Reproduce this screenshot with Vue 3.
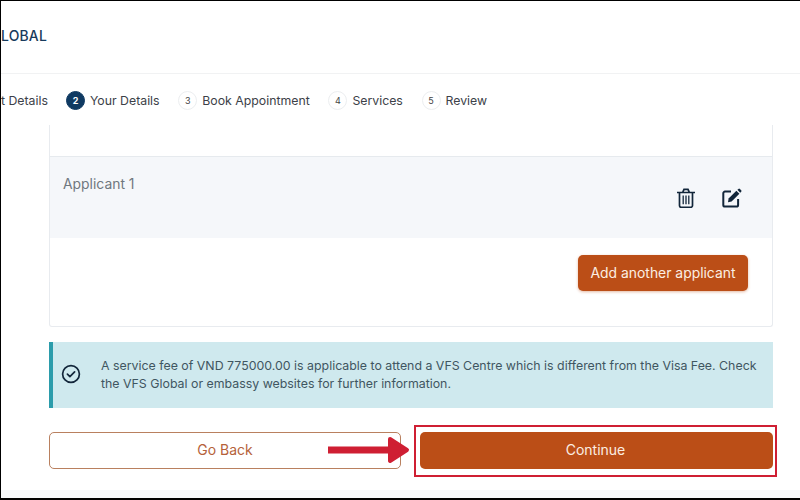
<script setup>
const steps = [
  { n: 3, label: 'Book Appointment' },
  { n: 4, label: 'Services' },
  { n: 5, label: 'Review' },
]
</script>

<template>
  <div class="page">
    <header class="top"><span class="logo">LOBAL</span></header>
    <nav class="stepper">
      <span class="label first">t Details</span>
      <div class="step">
        <span class="dot active">2</span>
        <span class="label">Your Details</span>
      </div>
      <div v-for="s in steps" :key="s.n" class="step">
        <span class="dot">{{ s.n }}</span>
        <span class="label">{{ s.label }}</span>
      </div>
    </nav>
    <main class="main">
      <section class="card">
        <div class="applicant">
          <span class="name">Applicant 1</span>
          <div class="tools">
            <svg width="18" height="20" viewBox="0 0 18 20" fill="none" stroke="#12263a" stroke-width="1.7">
              <path d="M.6 4.5h16.8" stroke-linecap="round" />
              <path d="M5.8 4.2 7 1.4h4l1.2 2.8" />
              <path d="M2.5 4.5v13a1.8 1.8 0 0 0 1.8 1.8h9.4a1.8 1.8 0 0 0 1.8-1.8v-13" />
              <path d="M6.2 7.6v8.6M9 7.6v8.6M11.8 7.6v8.6" stroke-width="1.3" />
            </svg>
            <svg width="20" height="20" viewBox="0 0 20 20" fill="none">
              <path d="M9 3.6H3a1.7 1.7 0 0 0-1.7 1.7v11.6A1.7 1.7 0 0 0 3 18.6h11.4a1.7 1.7 0 0 0 1.7-1.7v-6" stroke="#12263a" stroke-width="2" />
              <path d="M6.6 10.6 14.4 2.8l3 3-7.8 7.8-3.6.7z" fill="#12263a" />
              <path d="M15.4 1.8l1-.9a1.1 1.1 0 0 1 1.5 0l1.3 1.3a1.1 1.1 0 0 1 0 1.5l-1 1z" fill="#12263a" />
            </svg>
          </div>
        </div>
        <div class="add-row">
          <button class="add">Add another applicant</button>
        </div>
      </section>
      <aside class="alert">
        <svg class="check" width="20" height="20" viewBox="0 0 20 20" fill="none" stroke="#12263a" stroke-width="1.7">
          <circle cx="10" cy="10" r="8.4" />
          <path d="M6.4 10.2l2.5 2.4 4.7-4.7" stroke-linecap="round" stroke-linejoin="round" />
        </svg>
        <p>A service fee of VND 775000.00 is applicable to attend a VFS Centre which is different from the Visa Fee. Check the VFS Global or embassy websites for further information.</p>
      </aside>
      <div class="actions">
        <button class="back">Go Back</button>
        <button class="continue">Continue</button>
        <span class="highlight"></span>
        <svg class="arrow" width="82" height="34" viewBox="0 0 82 34">
          <rect x="0" y="13.5" width="62" height="7" fill="#cf1f33" />
          <path d="M62 6 79 17 62 28z" fill="#cf1f33" stroke="#cf1f33" stroke-width="4" stroke-linejoin="round" />
        </svg>
      </div>
    </main>
    <div class="foot"></div>
  </div>
</template>

<style>
html, body { margin: 0; background: #fff; }
</style>

<style scoped>
.page {
  width: 800px;
  height: 500px;
  box-sizing: border-box;
  border-top: 1px solid #000;
  border-left: 1px solid #000;
  border-bottom: 2px solid #000;
  display: flex;
  flex-direction: column;
  overflow: hidden;
  font-family: Inter, "Liberation Sans", sans-serif;
  background: #fff;
}
.top {
  height: 73px;
  flex: none;
  box-sizing: border-box;
  border-bottom: 1px solid #f1f2f3;
  display: flex;
  align-items: center;
}
.logo {
  font-size: 13.9px;
  font-weight: 500;
  letter-spacing: 0.2px;
  color: #173a5c;
  margin-top: -3px;
}
.stepper {
  height: 51px;
  box-sizing: border-box;
  padding-top: 2px;
  flex: none;
  display: flex;
  align-items: center;
  font-size: 12.3px;
  color: #3c4148;
}
.label { white-space: nowrap; }
.first { margin-right: 18px; }
.step {
  display: flex;
  align-items: center;
  gap: 5px;
  margin-right: 18.7px;
}
.dot {
  width: 19px;
  height: 19px;
  box-sizing: border-box;
  border-radius: 50%;
  border: 1px solid #eceef0;
  display: flex;
  align-items: center;
  justify-content: center;
  font-size: 9px;
  color: #444;
  background: #fff;
}
.active {
  background: #0f3a62;
  border-color: #0f3a62;
  color: #fff;
  font-weight: 700;
}
.main {
  flex: 1;
  padding: 0 27px 0 48px;
  display: flex;
  flex-direction: column;
  min-height: 0;
}
.card {
  height: 202px;
  flex: none;
  box-sizing: border-box;
  border: 1px solid #e8ebef;
  border-top: 0;
  padding-top: 31px;
  border-radius: 0 0 3px 3px;
}
.applicant {
  height: 82px;
  box-sizing: border-box;
  background: #f5f7fa;
  border-top: 1px solid #e6eaee;
  padding: 19px 30px 0 13px;
  display: flex;
  justify-content: space-between;
}
.name {
  font-size: 13.9px;
  color: #70777f;
}
.tools {
  display: flex;
  gap: 27px;
  height: 20px;
  margin-top: 12px;
}
.add-row {
  display: flex;
  justify-content: flex-end;
  padding: 17px 24px 0 0;
}
.add {
  width: 170px;
  height: 36px;
  border: 0;
  border-radius: 5px;
  background: #bb4e17;
  color: #fbeee3;
  font: 400 13.9px Inter, "Liberation Sans", sans-serif;
  box-shadow: 0 1px 3px rgba(187, 78, 23, .4);
}
.alert {
  margin-top: 15px;
  height: 66px;
  flex: none;
  box-sizing: border-box;
  background: #cfe9ee;
  border-left: 4px solid #2b9cab;
  display: flex;
  align-items: center;
  padding: 0 15px 0 8px;
}
.check { flex: none; margin: -2px 20px 0 0; }
.alert p {
  margin: 0;
  font-size: 12.37px;
  line-height: 18px;
  color: #3f5661;
}
.actions {
  position: relative;
  margin-top: 24px;
  display: flex;
  gap: 19px;
}
.actions button {
  height: 37px;
  border-radius: 5px;
  padding: 0 0 2px;
  font: 400 14px Inter, "Liberation Sans", sans-serif;
  box-sizing: border-box;
}
.back {
  width: 352px;
  background: #fff;
  border: 1px solid #b9805f;
  color: #b5623a;
}
.continue {
  width: 353px;
  background: #bb4e17;
  border: 0;
  color: #fbeee3;
}
.actions .continue { padding-right: 2px; }
.highlight {
  position: absolute;
  left: 365px;
  top: -7px;
  width: 363px;
  height: 52px;
  box-sizing: border-box;
  border: 2px solid #cf1f33;
  pointer-events: none;
}
.arrow {
  position: absolute;
  left: 279px;
  top: 1px;
}
.foot {
  height: 8px;
  flex: none;
  background: #f7f8fa;
}
</style>
